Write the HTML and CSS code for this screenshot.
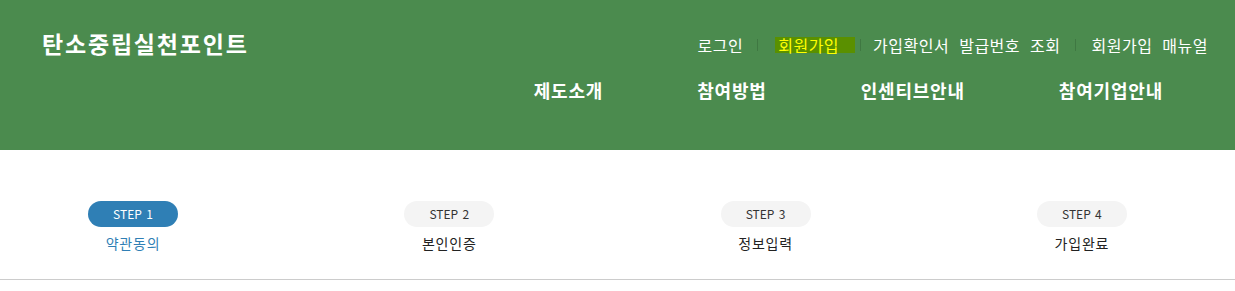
FILE: index.html
```html
<!DOCTYPE html>
<html lang="ko">
<head>
<meta charset="utf-8">
<title>탄소중립실천포인트 - 회원가입</title>
<link rel="stylesheet" href="styles.css">
</head>
<body>
<header class="header">
  <h1 class="logo">탄소중립실천포인트</h1>
  <div class="header-right">
    <ul class="util">
      <li><a href="#">로그인</a></li>
      <li class="sep sep-first"></li>
      <li><a href="#" class="util-active">회원가입</a></li>
      <li class="sep sep-tight"></li>
      <li><a href="#">가입확인서 발급번호 조회</a></li>
      <li class="sep"></li>
      <li><a href="#">회원가입 매뉴얼</a></li>
    </ul>
    <nav class="gnb">
      <a href="#">제도소개</a>
      <a href="#">참여방법</a>
      <a href="#">인센티브안내</a>
      <a href="#">참여기업안내</a>
    </nav>
  </div>
</header>
<section class="steps">
  <ol class="step-list">
    <li class="step step-on"><span class="pill">STEP 1</span><span class="label">약관동의</span></li>
    <li class="step"><span class="pill">STEP 2</span><span class="label">본인인증</span></li>
    <li class="step"><span class="pill">STEP 3</span><span class="label">정보입력</span></li>
    <li class="step"><span class="pill">STEP 4</span><span class="label">가입완료</span></li>
  </ol>
</section>
</body>
</html>
```
FILE: styles.css
```css
* { box-sizing: border-box; }
body {
  margin: 0;
  font-family: "Noto Sans CJK KR", "Noto Sans", sans-serif;
  background: #fff;
  color: #333;
}
a { text-decoration: none; color: inherit; }
ul, ol { list-style: none; margin: 0; padding: 0; }

.header {
  height: 150px;
  background: #4b8b4e;
  display: flex;
  justify-content: space-between;
  align-items: flex-start;
  padding: 0 25px 0 42px;
}
.logo {
  margin: 29px 0 0;
  font-size: 23px;
  line-height: 28px;
  letter-spacing: 1.8px;
  font-weight: 700;
  color: #fff;
}
.header-right {
  display: flex;
  flex-direction: column;
  align-items: flex-end;
}
.util {
  display: flex;
  align-items: center;
  margin-top: 33px;
  margin-right: 2px;
  height: 24px;
}
.util li { display: flex; align-items: center; }
.util a {
  color: #fff;
  font-size: 16px;
  line-height: 16px;
  letter-spacing: 0.5px;
  word-spacing: 5px;
}
.util .sep {
  width: 1px;
  height: 12px;
  background: #3f7842;
  margin: 0 15px;
}
.util .sep-first { margin: 0 17px 0 14px; }
.util .sep-tight { margin: 0 12px 0 5px; }
.util .util-active {
  color: #ffff00;
  background: #5a9000;
  padding: 0 16px 0 3px;
}
.gnb {
  display: flex;
  margin-top: 20px;
}
.gnb a {
  padding: 0 47px;
  color: #fff;
  font-size: 18px;
  line-height: 26px;
  letter-spacing: 0.8px;
  font-weight: 700;
}

.steps {
  padding: 51px 0 26px;
  border-bottom: 1px solid #cccccc;
}
.step-list {
  display: grid;
  grid-template-columns: repeat(4, 90px);
  column-gap: 226.3px;
  padding-left: 88px;
}
.step {
  display: flex;
  flex-direction: column;
  align-items: center;
}
.pill {
  width: 90px;
  height: 26px;
  border-radius: 13px;
  background: #f4f4f4;
  color: #333;
  font-size: 12px;
  line-height: 26px;
  text-align: center;
  word-spacing: 1px;
}
.label {
  margin-top: 6px;
  font-size: 14px;
  line-height: 20px;
  letter-spacing: 0.8px;
  color: #222;
  white-space: nowrap;
}
.step-on .pill { background: #2f7fb5; color: #fff; }
.step-on .label { color: #2f7fb5; }
```
